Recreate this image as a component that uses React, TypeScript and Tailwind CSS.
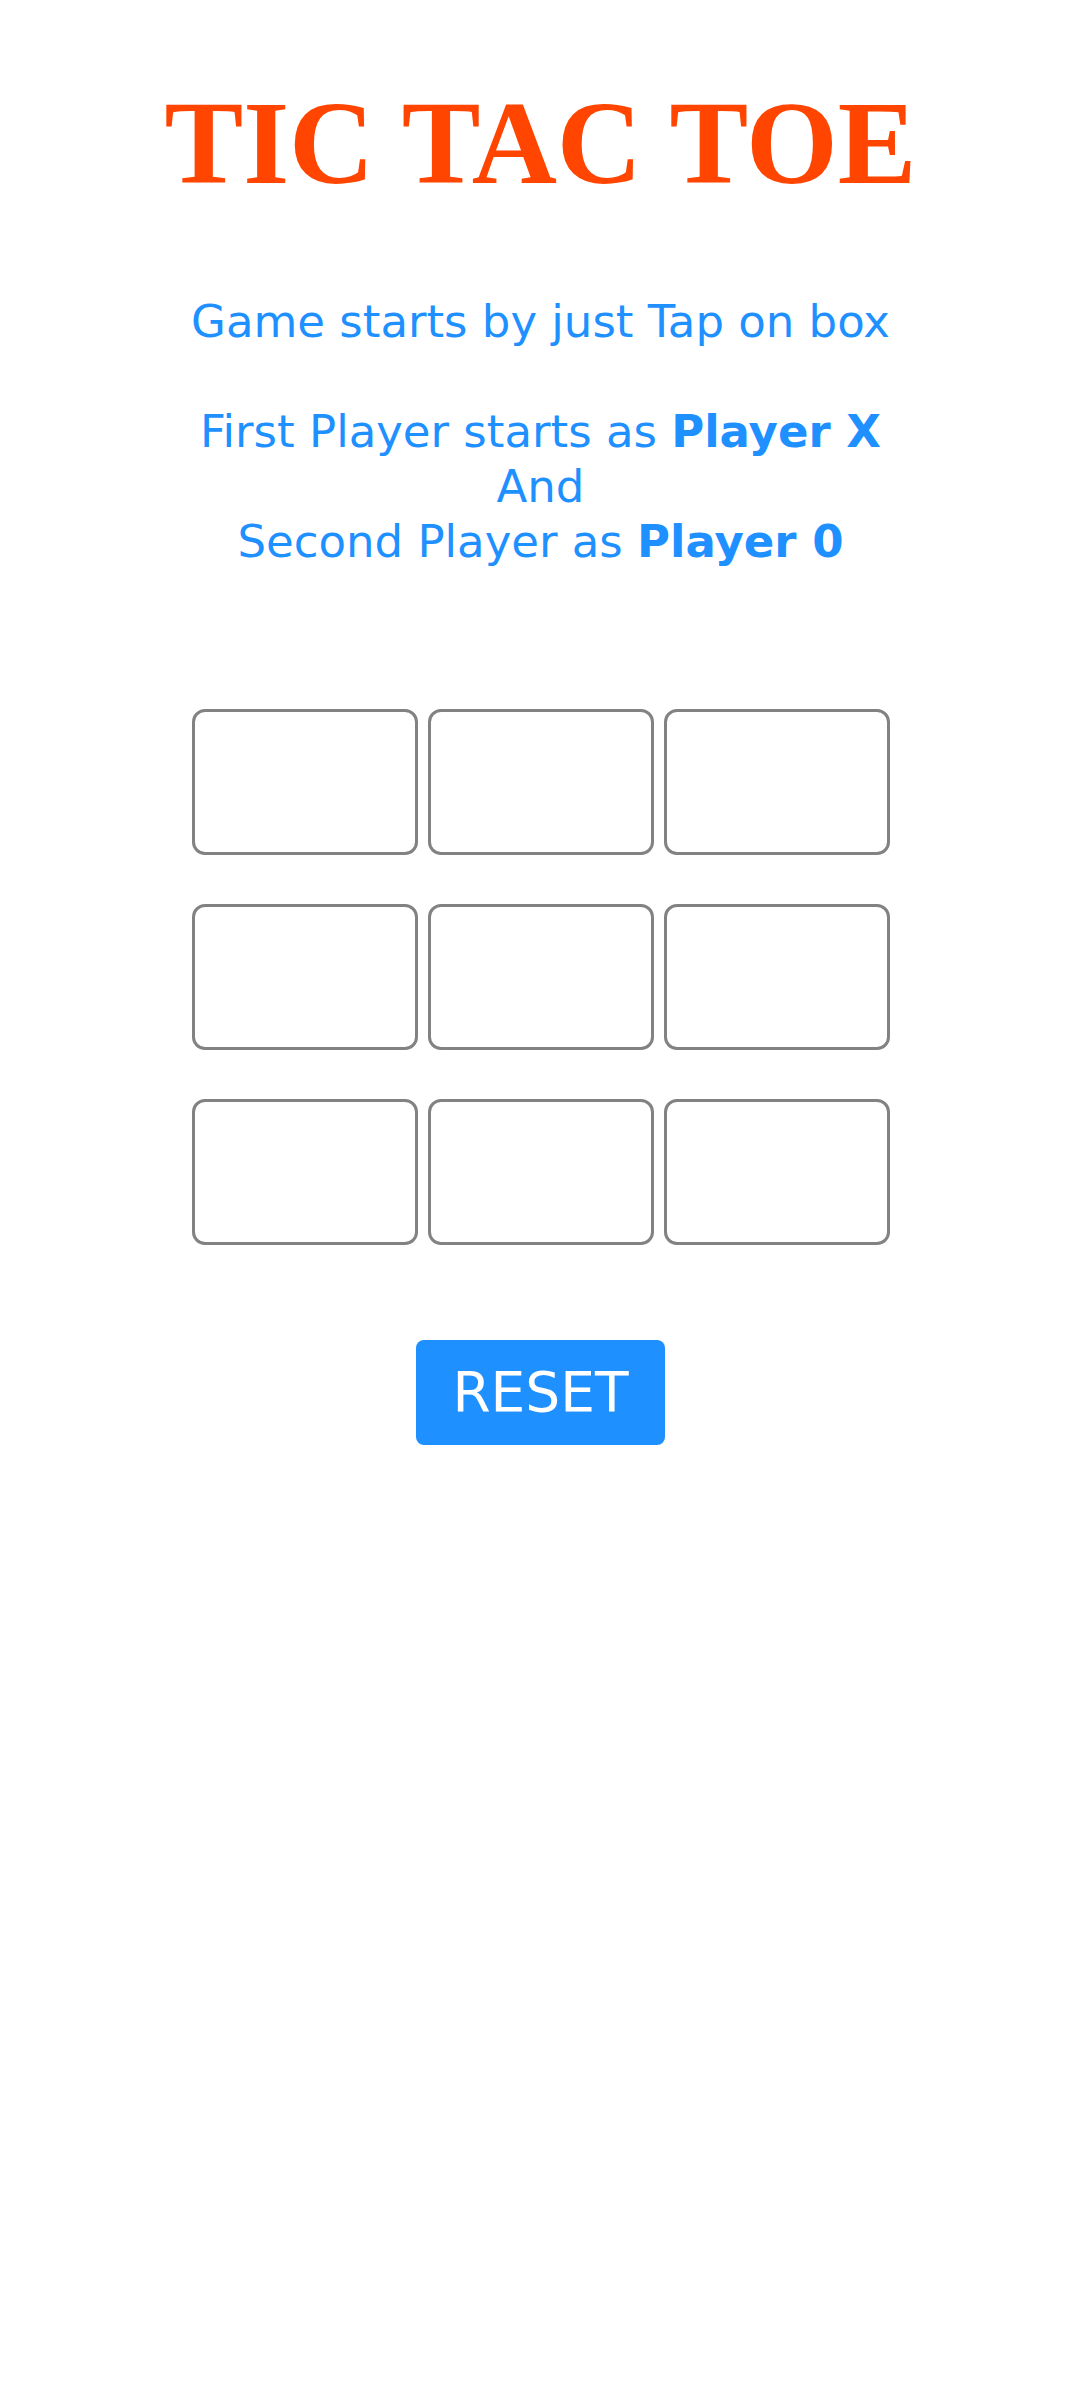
import React from 'react';

const cells = Array.from({ length: 9 }, (_, i) => i);

const App: React.FC = () => {
  return (
    <div className="min-h-screen w-full bg-white flex flex-col items-center font-['DejaVu_Sans',sans-serif]">
      {/* Title */}
      <h1 className="pt-[85px] text-[118px] leading-none font-bold text-[#ff4500] font-['Liberation_Serif',serif] whitespace-nowrap">
        TIC TAC TOE
      </h1>

      {/* Instructions */}
      <p className="mt-[91px] text-center text-[45px] leading-[55px] text-[#1e90ff]">
        Game starts by just Tap on box
        <br />
        <br />
        First Player starts as <b className="font-bold">Player X</b>
        <br />
        And
        <br />
        Second Player as <b className="font-bold">Player 0</b>
      </p>

      {/* Board */}
      <div className="mt-[140px] grid grid-cols-[repeat(3,226px)] grid-rows-[repeat(3,146px)] gap-x-[10px] gap-y-[49px]">
        {cells.map((i) => (
          <button
            key={i}
            className="rounded-[13px] border-[3px] border-[#828282] bg-white"
            aria-label={`cell ${i + 1}`}
          />
        ))}
      </div>

      {/* Reset */}
      <button className="mt-[95px] w-[249px] h-[105px] rounded-[8px] bg-[#1e90ff] text-white text-[55px] leading-none">
        RESET
      </button>
    </div>
  );
};

export default App;
